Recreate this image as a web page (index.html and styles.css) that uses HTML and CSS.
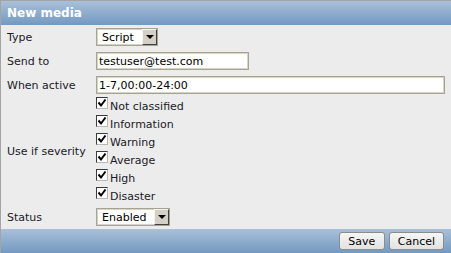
FILE: index.html
```html
<!DOCTYPE html>
<html lang="en">
<head>
  <meta charset="UTF-8" />
  <title>New media</title>
  <link rel="stylesheet" href="styles.css">
</head>
<body>

  <div class="dialog">
    <div class="header">New media</div>

    <div class="form">
      <div class="label">Type</div>
      <div class="field">
        <div class="select type-select">
          <span class="value">Script</span>
          <span class="arrow"></span>
        </div>
      </div>

      <div class="label">Send to</div>
      <div class="field">
        <div class="input send-input">testuser@test.com</div>
      </div>

      <div class="label">When active</div>
      <div class="field">
        <div class="input active-input">1-7,00:00-24:00</div>
      </div>

      <div class="label">Use if severity</div>
      <div class="checks">
        <div class="check"><span class="box"><svg viewBox="0 0 10 10"><path d="M1.5 4.5 L4 7.5 L8.5 1.5" /></svg></span><span class="text">Not classified</span></div>
        <div class="check"><span class="box"><svg viewBox="0 0 10 10"><path d="M1.5 4.5 L4 7.5 L8.5 1.5" /></svg></span><span class="text">Information</span></div>
        <div class="check"><span class="box"><svg viewBox="0 0 10 10"><path d="M1.5 4.5 L4 7.5 L8.5 1.5" /></svg></span><span class="text">Warning</span></div>
        <div class="check"><span class="box"><svg viewBox="0 0 10 10"><path d="M1.5 4.5 L4 7.5 L8.5 1.5" /></svg></span><span class="text">Average</span></div>
        <div class="check"><span class="box"><svg viewBox="0 0 10 10"><path d="M1.5 4.5 L4 7.5 L8.5 1.5" /></svg></span><span class="text">High</span></div>
        <div class="check"><span class="box"><svg viewBox="0 0 10 10"><path d="M1.5 4.5 L4 7.5 L8.5 1.5" /></svg></span><span class="text">Disaster</span></div>
      </div>

      <div class="label">Status</div>
      <div class="field">
        <div class="select status-select">
          <span class="value">Enabled</span>
          <span class="arrow"></span>
        </div>
      </div>
    </div>

    <div class="footer">
      <button class="btn save">Save</button>
      <button class="btn">Cancel</button>
    </div>
  </div>

</body>
</html>
```

FILE: styles.css
```css
body {
  margin: 0;
  background: #ececec;
  font-family: "DejaVu Sans", Verdana, sans-serif;
  font-size: 11px;
  color: #1a1a28;
}

.dialog {
  width: 451px;
  height: 253px;
  box-sizing: border-box;
  border-top: 1px solid #a4a4a4;
  border-left: 1px solid #a4a4a4;
  display: flex;
  flex-direction: column;
  overflow: hidden;
}

.header {
  height: 24px;
  line-height: 24px;
  padding-left: 6px;
  background: linear-gradient(#a9c0d9, #7399c1);
  color: #fff;
  font-weight: bold;
  font-size: 12px;
}

.form {
  display: grid;
  grid-template-columns: 89px 1fr;
  padding-left: 6px;
  flex: 1;
}

.label {
  display: flex;
  align-items: center;
}

.field {
  padding: 3px 0;
  display: flex;
}

.input,
.select {
  height: 18px;
  box-sizing: border-box;
  background: #fff;
  border: 1px solid #a5a392;
  box-shadow: inset 0 0 0 1px #d6d4c8;
  display: flex;
  align-items: center;
}

.input {
  padding-left: 2px;
  color: #000;
}

.send-input {
  width: 153px;
}

.active-input {
  width: 349px;
}

.select {
  padding-left: 5px;
  justify-content: space-between;
  color: #000;
}

.type-select {
  width: 62px;
}

.status-select {
  width: 74px;
}

.arrow {
  width: 15px;
  height: 16px;
  box-sizing: border-box;
  background: #d4d0c8;
  border: 1px solid #404040;
  border-top-color: #f4f4f4;
  border-left-color: #f4f4f4;
  display: flex;
  align-items: center;
  justify-content: center;
}

.arrow::after {
  content: "";
  border-left: 4px solid transparent;
  border-right: 4px solid transparent;
  border-top: 4px solid #000;
}

.checks {
  display: flex;
  flex-direction: column;
}

.check {
  height: 18px;
  display: flex;
  align-items: flex-start;
  gap: 2px;
}

.box {
  width: 12px;
  height: 12px;
  box-sizing: border-box;
  background: #fff;
  border: 1px solid #3c3c3c;
  border-right-color: #b8b8b8;
  border-bottom-color: #b8b8b8;
  display: flex;
}

.box svg {
  width: 10px;
  height: 10px;
  fill: none;
  stroke: #000;
  stroke-width: 2;
}

.check .text {
  margin-top: 3px;
  line-height: 14px;
}

.footer {
  height: 24px;
  background: linear-gradient(#a9c0d9, #7399c1);
  display: flex;
  justify-content: flex-end;
  align-items: center;
  gap: 4px;
  padding-right: 7px;
}

.btn {
  height: 18px;
  padding: 0 8px;
  font-family: "DejaVu Sans", Verdana, sans-serif;
  font-size: 11px;
  color: #000;
  background: linear-gradient(#f6f6f6, #e2e2e2);
  border: 1px solid #8c8c8c;
  border-radius: 3px;
}

.save {
  min-width: 46px;
}
```
